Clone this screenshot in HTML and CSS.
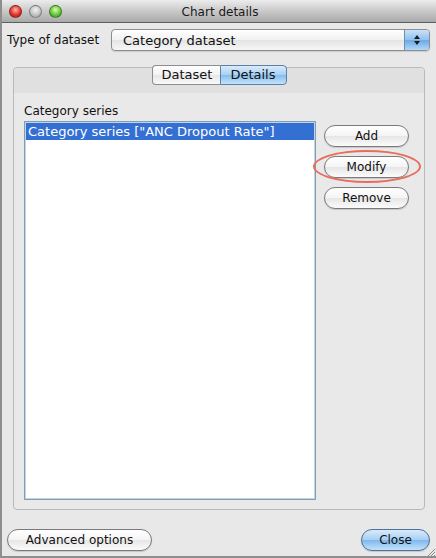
FILE: index.html
```html
<!DOCTYPE html>
<html>
<head>
<meta charset="utf-8">
<link rel="stylesheet" href="styles.css">
</head>
<body>
<div class="window">
  <div class="titlebar">
    <div class="lights">
      <span class="light red"></span>
      <span class="light grey"></span>
      <span class="light green"></span>
    </div>
    <div class="title">Chart details</div>
  </div>
  <div class="content">
    <div class="typerow">
      <span class="label">Type of dataset</span>
      <div class="combo">
        <span class="combo-text">Category dataset</span>
        <span class="combo-arrow">
          <svg width="8" height="12" viewBox="0 0 8 12"><path d="M4 1 L7 5 L1 5 Z" fill="#1a1a1a"/><path d="M4 11 L7 7 L1 7 Z" fill="#1a1a1a"/></svg>
        </span>
      </div>
    </div>
    <div class="tabarea">
      <div class="tabs">
        <span class="tab">Dataset</span>
        <span class="tab active">Details</span>
      </div>
      <div class="panel">
        <div class="panel-head"></div>
        <div class="panel-body">
          <div class="list-col">
            <div class="list-label">Category series</div>
            <div class="list">
              <div class="row selected">Category series ["ANC Dropout Rate"]</div>
            </div>
          </div>
          <div class="btn-col">
            <button class="btn">Add</button>
            <div class="highlight"><button class="btn">Modify</button></div>
            <button class="btn">Remove</button>
          </div>
        </div>
      </div>
    </div>
    <div class="footer">
      <button class="btn wide">Advanced options</button>
      <button class="btn primary">Close</button>
    </div>
    <div class="grip">
      <svg width="10" height="10" viewBox="0 0 10 10"><path d="M9 2 L2 9 M9 5 L5 9 M9 8 L8 9" stroke="#8c8c8c" stroke-width="1"/></svg>
    </div>
  </div>
</div>
</body>
</html>
```
FILE: styles.css
```css
html, body {
  margin: 0;
  padding: 0;
}
body {
  width: 436px;
  height: 558px;
  background: #8e8e8e;
  overflow: hidden;
  font-family: "DejaVu Sans", Verdana, sans-serif;
  font-size: 12px;
  color: #111;
}
.window {
  margin-left: 2px;
  width: 434px;
  height: 556px;
  display: flex;
  flex-direction: column;
  background: #e8e8e8;
}
.titlebar {
  height: 22px;
  border-bottom: 1px solid #5e5e5e;
  background: linear-gradient(#ececec, #c9c9c9 50%, #a9a9a9);
  position: relative;
  display: flex;
  align-items: center;
  justify-content: center;
}
.lights {
  position: absolute;
  left: 7px;
  top: 5px;
  display: flex;
  gap: 7px;
}
.light {
  width: 13px;
  height: 13px;
  border-radius: 50%;
  box-sizing: border-box;
  border: 1px solid rgba(0,0,0,0.35);
}
.light.red { background: radial-gradient(circle at 50% 35%, #ffb3ad, #e1352c 55%, #a3140d); }
.light.grey { background: radial-gradient(circle at 50% 35%, #f3f3f3, #c4c4c4 55%, #979797); }
.light.green { background: radial-gradient(circle at 50% 35%, #d7ffb4, #68c63b 55%, #2f8a13); }
.title {
  font-size: 12px;
  color: #1a1a1a;
  margin-left: 2px;
  margin-top: 2px;
}
.content {
  flex: 1;
  display: flex;
  flex-direction: column;
  position: relative;
}
.typerow {
  display: flex;
  align-items: center;
  padding: 6px 6px 0 5px;
  height: 22px;
}
.label {
  width: 104px;
}
.combo {
  flex: 1;
  height: 22px;
  box-sizing: border-box;
  border: 1px solid #8d8d8d;
  border-radius: 4px;
  background: linear-gradient(#ffffff, #f1f1f1 50%, #e4e4e4 51%, #f6f6f6);
  display: flex;
  align-items: center;
  overflow: hidden;
  box-shadow: 0 1px 1px rgba(0,0,0,0.12);
}
.combo-text {
  flex: 1;
  padding-left: 11px;
  font-size: 13px;
}
.combo-arrow {
  width: 24px;
  height: 20px;
  background: linear-gradient(#c9e2fa, #8fc0ef 50%, #6aa9e8 51%, #b2d8f8);
  border-left: 1px solid #6f8fb0;
  display: flex;
  align-items: center;
  justify-content: center;
}
.tabarea {
  position: relative;
  margin: 16px 11px 0 11px;
  height: 443px;
}
.tabs {
  position: absolute;
  top: -2px;
  left: 0;
  right: 0;
  display: flex;
  justify-content: center;
  z-index: 2;
  font-size: 13px;
}
.tab {
  height: 18px;
  line-height: 18px;
  box-sizing: content-box;
  border: 1px solid #8d8d8d;
  background: linear-gradient(#ffffff, #f3f3f3 50%, #e6e6e6 51%, #fafafa);
}
.tab:first-child {
  border-radius: 4px 0 0 4px;
  border-right: none;
  padding: 0 8px 0 9px;
}
.tab.active {
  border-radius: 0 4px 4px 0;
  border-color: #5f7fa5;
  background: linear-gradient(#d9ecfc, #a7d0f4 50%, #84bdee 51%, #c5e3fb);
  padding: 0 10px 0 9px;
}
.panel {
  height: 100%;
  box-sizing: border-box;
  border: 1px solid #b9b9b9;
  border-radius: 4px;
  background: #e9e9e9;
  display: flex;
  flex-direction: column;
}
.panel-head {
  height: 25px;
  background: #e0e0e0;
  border-radius: 4px 4px 0 0;
}
.panel-body {
  flex: 1;
  display: flex;
  padding: 8px 0 9px 10px;
}
.list-col {
  width: 292px;
  display: flex;
  flex-direction: column;
}
.list-label {
  height: 20px;
  line-height: 20px;
  padding-left: 0;
}
.list {
  flex: 1;
  background: #fff;
  border: 1px solid #7f9db9;
  box-shadow: inset 0 0 0 1px #c5d4e2;
  padding: 1px;
}
.row {
  height: 17px;
  line-height: 17px;
  padding-left: 2px;
  font-size: 13px;
  white-space: nowrap;
}
.row.selected {
  background: #3470d4;
  color: #fff;
}
.btn-col {
  display: flex;
  flex-direction: column;
  align-items: flex-start;
  padding: 24px 0 0 8px;
  gap: 9px;
}
.btn {
  font-family: inherit;
  font-size: 12px;
  color: #111;
  width: 85px;
  height: 22px;
  box-sizing: border-box;
  border: 1px solid #7a7a7a;
  border-radius: 11px;
  background: linear-gradient(#ffffff, #f4f4f4 50%, #e6e6e6 51%, #fbfbfb);
  padding: 0;
  margin: 0;
  box-shadow: 0 1px 1px rgba(0,0,0,0.15);
}
.highlight {
  position: relative;
}
.highlight::after {
  content: "";
  position: absolute;
  left: -11px;
  top: -6px;
  width: 108px;
  height: 33px;
  box-sizing: border-box;
  border: 2px solid #e86d5c;
  border-radius: 50%;
}
.footer {
  display: flex;
  justify-content: space-between;
  align-items: center;
  padding: 0 6px 0 5px;
  margin-top: 19px;
}
.btn.wide {
  width: 145px;
}
.btn.primary {
  width: 69px;
  border-color: #4f6f96;
  background: linear-gradient(#d8ebfc, #a5cef3 50%, #7db8ec 51%, #c4e2fb);
}
.grip {
  position: absolute;
  right: 0;
  bottom: 0;
  width: 10px;
  height: 10px;
}
```
